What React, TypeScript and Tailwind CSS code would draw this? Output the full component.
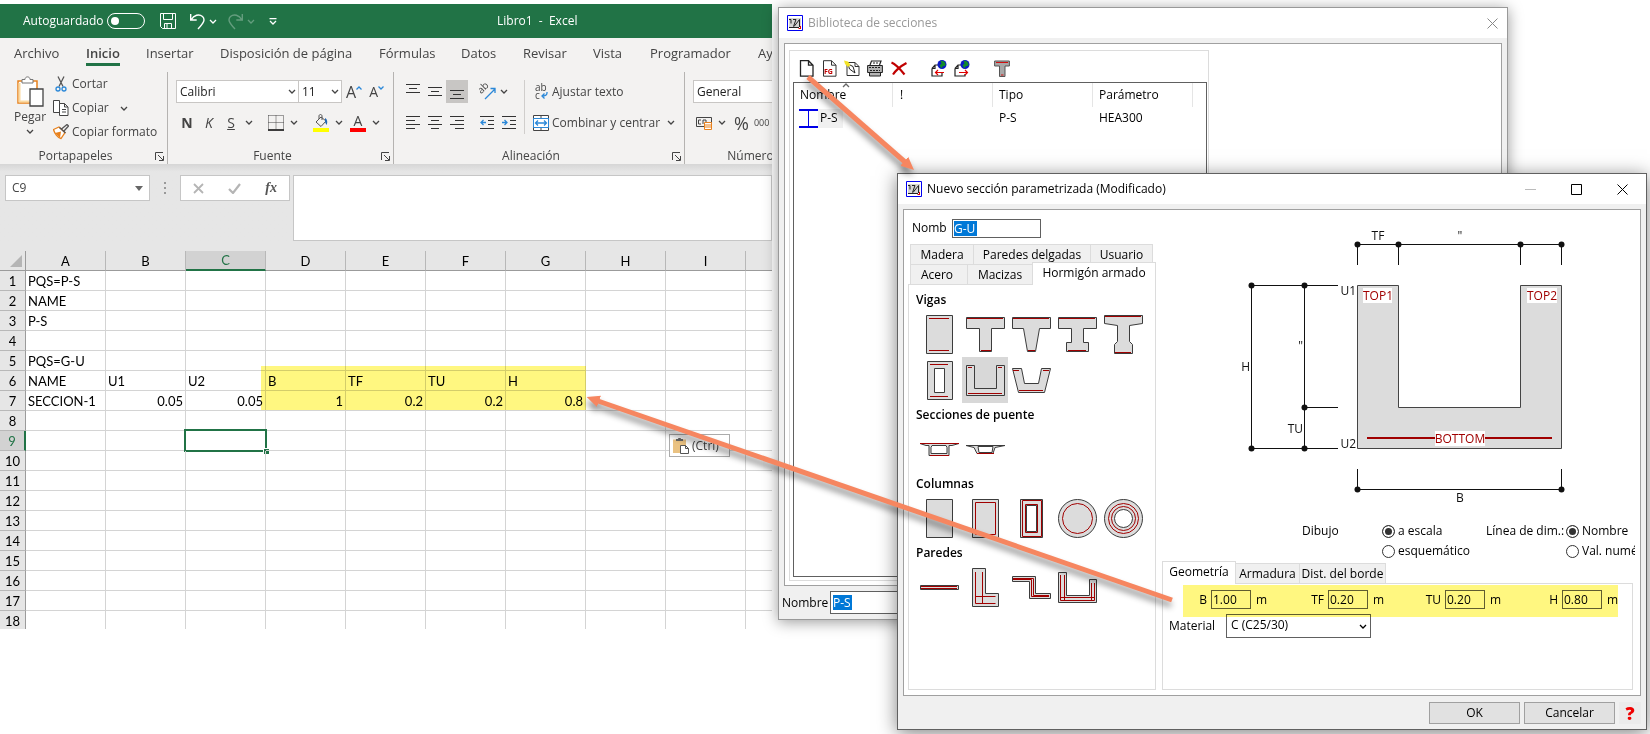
import type { ReactNode } from "react";
import clsx from "clsx";

/* ---------- Shared bits ---------- */

function Chevron({ className = "" }: { className?: string }) {
  return (
    <svg viewBox="0 0 8 5" className={clsx("h-[5px] w-2 shrink-0 fill-none stroke-current", className)}>
      <path d="M1 1l3 3 3-3" strokeWidth="1.3" />
    </svg>
  );
}

function AppLogo() {
  return (
    <svg viewBox="0 0 16 16" className="size-4 shrink-0">
      <path d="M0.5 0.5h15v15h-15z" fill="#fff" stroke="#0000f0" />
      <path d="M2 3h12v9H2z" fill="#d4d4d4" />
      <path d="M2 4.500h2v4M6 4.500h3L6.500 11.500M7 11.500L12.500 4.500v7.500M2 12.500h10" stroke="#222" fill="none" />
      <path d="M13.500 11v3M11.500 13.500h2" stroke="#e00000" fill="none" />
    </svg>
  );
}

/* ---------- Excel ribbon ---------- */

const ribbonTabs = [
  { label: "Archivo", width: "w-[72px]" },
  { label: "Inicio", width: "w-[60px]", active: true },
  { label: "Insertar", width: "w-[74px]" },
  { label: "Disposición de página", width: "w-[159px]" },
  { label: "Fórmulas", width: "w-[82px]" },
  { label: "Datos", width: "w-[62px]" },
  { label: "Revisar", width: "w-[70px]" },
  { label: "Vista", width: "w-[57px]" },
  { label: "Programador", width: "w-[108px]" },
  { label: "Ayuda", width: "w-[60px]" },
];

function RibbonGroup({ label, className, launcher = true, children }: { label: string; className: string; launcher?: boolean; children: ReactNode }) {
  return (
    <section className={clsx("flex shrink-0 flex-col border-r border-[#b5b3b1]", className)}>
      <div className="h-[76px]">{children}</div>
      <div className="relative flex h-4 items-center justify-center pr-4">
        <span>{label}</span>
        {launcher && (
          <button aria-label={`Opciones de ${label}`} className="absolute right-[3px] top-1">
            <svg viewBox="0 0 9 9" className="size-[9px] fill-none stroke-[#444]">
              <path d="M0.500 8V0.500H8M3 3l5 5M8.500 4v4.500H4" />
            </svg>
          </button>
        )}
      </div>
    </section>
  );
}

function Divider() {
  return <span className="h-[22px] w-px shrink-0 bg-[#d0cecc]" />;
}

function AlignIcon({ lines }: { lines: string }) {
  return (
    <svg viewBox="0 0 14 15" className="h-[15px] w-[14px] fill-none stroke-[#333]">
      <path d={lines} />
    </svg>
  );
}

function Clipboard() {
  return (
    <div className="flex pl-[14px]">
      <button className="flex w-8 flex-col items-center pt-1">
        <svg viewBox="0 0 28 31" className="h-[31px] w-7 fill-none">
          <path d="M2 5h19v22H2z" fill="#fff" stroke="#e8811c" strokeWidth="1.500" />
          <path d="M3.500 7v18.500h10" stroke="#fbd9a0" strokeWidth="2" />
          <path d="M6 7V3.500h3C9 0 14 0 14 3.500h3V7z" fill="#fff" stroke="#777" />
          <path d="M14 13h13v17H14z" fill="#fff" stroke="#444" strokeWidth="1.300" />
        </svg>
        <span className="mt-[2px] leading-4">Pegar</span>
        <Chevron className="mt-1" />
      </button>
      <div className="ml-[7px] flex flex-col">
        <button className="flex h-6 items-center gap-[3px]">
          <svg viewBox="0 0 16 16" className="size-4 fill-none">
            <path d="M5 0.500l5 10M11 0.500L6 10.500" stroke="#555" strokeWidth="1.300" />
            <circle cx="5" cy="13" r="2" stroke="#2b88d8" strokeWidth="1.300" />
            <circle cx="11" cy="13" r="2" stroke="#2b88d8" strokeWidth="1.300" />
          </svg>
          Cortar
        </button>
        <button className="flex h-6 items-center gap-[3px]">
          <svg viewBox="0 0 16 16" className="size-4 fill-white stroke-[#444]">
            <path d="M0.500 0.500h6v12h-6z" />
            <path d="M6.500 3.500h5l3.500 3.500v8.500H6.500zM11.500 3.500V7H15M9 9.500h4M9 12h4" />
          </svg>
          Copiar
          <Chevron className="ml-2" />
        </button>
        <button className="flex h-6 items-center gap-[3px] whitespace-nowrap">
          <svg viewBox="0 0 16 16" className="size-4 fill-none">
            <path d="M0.500 5.500L6 3l6 5.500-4 6C5 14 1.500 9.500 0.500 5.500z" fill="#fff" stroke="#e8811c" strokeWidth="1.300" />
            <path d="M2 9l6-1.500L7 14z" fill="#e8811c" />
            <path d="M6.500 3.500l6 5.500M8.500 5l5.500-4.500L15.500 2l-4.500 5" stroke="#555" strokeWidth="1.300" />
          </svg>
          Copiar formato
        </button>
      </div>
    </div>
  );
}

function FontControls() {
  return (
    <div className="flex flex-col gap-2 pl-2 pt-2">
      <div className="flex h-[23px] items-center">
        <label className="flex h-full w-[123px] items-center border border-[#c8c6c4] bg-white pr-[2px]">
          <input aria-label="Fuente" defaultValue="Calibri" className="h-full min-w-0 flex-1 pl-[3px] text-[#222] outline-none" />
          <Chevron />
        </label>
        <label className="flex h-full w-[43px] items-center border border-l-0 border-[#c8c6c4] bg-white pr-[2px]">
          <input aria-label="Tamaño de fuente" defaultValue="11" className="h-full min-w-0 flex-1 pl-[3px] text-[#222] outline-none" />
          <Chevron />
        </label>
        <button aria-label="Aumentar tamaño" className="ml-1 flex items-start text-base leading-5">
          A
          <svg viewBox="0 0 6 4" className="mt-1 h-1 w-[6px] fill-none stroke-[#2b88d8]"><path d="M0.500 3.500L3 1l2.500 2.500" strokeWidth="1.300" /></svg>
        </button>
        <button aria-label="Reducir tamaño" className="ml-[7px] flex items-start text-sm leading-5">
          A
          <svg viewBox="0 0 6 4" className="mt-1 h-1 w-[6px] fill-none stroke-[#2b88d8]"><path d="M0.500 0.500L3 3 5.500 0.500" strokeWidth="1.300" /></svg>
        </button>
      </div>
      <div className="flex h-[23px] items-center text-sm">
        <button className="w-[22px] font-bold">N</button>
        <button className="w-[22px] italic">K</button>
        <button className="w-[22px] underline">S</button>
        <Chevron className="ml-[3px]" />
        <span className="ml-2"><Divider /></span>
        <button aria-label="Bordes" className="ml-[7px]">
          <svg viewBox="0 0 16 16" className="size-4 fill-none stroke-[#444]">
            <path d="M0.500 0.500h15v13.500M0.500 0.500v13.500M8 0.500v13.500M0.500 7.500h15" strokeDasharray="1 1" />
            <path d="M0 15h16" stroke="#000" strokeWidth="1.500" />
          </svg>
        </button>
        <Chevron className="ml-[6px]" />
        <span className="ml-2"><Divider /></span>
        <button aria-label="Color de relleno" className="ml-[7px]">
          <svg viewBox="0 0 16 18" className="h-[18px] w-4 fill-none">
            <path d="M3 8l5-5 5 4-5 5.500zM6 5V2c0-2 3-2 3 0v4" stroke="#555" />
            <path d="M12 4c2 1 3 4 1.500 7L12 8z" fill="#2167b5" />
            <path d="M0 14h16v4H0z" fill="#ffff00" />
          </svg>
        </button>
        <Chevron className="ml-[6px]" />
        <button aria-label="Color de fuente" className="ml-[7px] flex w-4 flex-col items-center leading-[14px]">
          A
          <span className="h-1 w-4 bg-[#ff0000]" />
        </button>
        <Chevron className="ml-[6px]" />
      </div>
    </div>
  );
}

function AlignControls() {
  return (
    <div className="flex pl-2 pt-2">
      <div className="flex w-[122px] flex-col gap-2">
        <div className="flex h-[23px] items-center">
          <button aria-label="Alinear arriba" className="flex h-full w-[22px] items-center justify-center pb-1"><AlignIcon lines="M0 2.500h14M3 6.500h8M0 10.500h14" /></button>
          <button aria-label="Alinear al medio" className="flex h-full w-[22px] items-center justify-center"><AlignIcon lines="M0 3.500h14M3 7.500h8M0 11.500h14" /></button>
          <button aria-label="Alinear abajo" className="flex h-full w-[22px] items-center justify-center bg-[#c8c6c4] pt-1"><AlignIcon lines="M0 4.500h14M3 8.500h8M0 12.500h14" /></button>
          <span className="ml-1"><Divider /></span>
          <button aria-label="Orientación" className="ml-[7px]">
            <svg viewBox="0 0 17 17" className="size-[17px] fill-none">
              <text x="0" y="8" fontSize="10" fill="#444" transform="rotate(-45 5 7)">ab</text>
              <path d="M6 16L16 6M11.500 5.500H16V10" stroke="#2b88d8" strokeWidth="1.300" />
            </svg>
          </button>
          <Chevron className="ml-1" />
        </div>
        <div className="flex h-[23px] items-center">
          <button aria-label="Izquierda" className="flex w-[22px] justify-center"><AlignIcon lines="M0 1.500h14M0 5.500h9M0 9.500h14M0 13.500h9" /></button>
          <button aria-label="Centrar" className="flex w-[22px] justify-center"><AlignIcon lines="M0 1.500h14M3 5.500h8M0 9.500h14M3 13.500h8" /></button>
          <button aria-label="Derecha" className="flex w-[22px] justify-center"><AlignIcon lines="M0 1.500h14M5 5.500h9M0 9.500h14M5 13.500h9" /></button>
          <span className="ml-1"><Divider /></span>
          <button aria-label="Disminuir sangría" className="ml-[8px]">
            <svg viewBox="0 0 14 15" className="h-[15px] w-[14px] fill-none stroke-[#333]">
              <path d="M0 1.500h14M8 5.500h6M8 9.500h6M0 13.500h14" />
              <path d="M6 7.500H1M3.500 5L1 7.500 3.500 10" stroke="#2b88d8" strokeWidth="1.300" />
            </svg>
          </button>
          <button aria-label="Aumentar sangría" className="ml-2">
            <svg viewBox="0 0 14 15" className="h-[15px] w-[14px] fill-none stroke-[#333]">
              <path d="M0 1.500h14M8 5.500h6M8 9.500h6M0 13.500h14" />
              <path d="M0 7.500h5M2.500 5L5 7.500 2.500 10" stroke="#2b88d8" strokeWidth="1.300" />
            </svg>
          </button>
        </div>
      </div>
      <div className="flex flex-col gap-2 border-l border-[#d0cecc] pl-2">
        <button className="flex h-[23px] items-center gap-[3px]">
          <svg viewBox="0 0 16 18" className="h-[18px] w-4 overflow-visible fill-none">
            <text x="2" y="8" fontSize="10" fill="#444">ab</text>
            <text x="2" y="16" fontSize="10" fill="#444">c</text>
            <path d="M14 9v1c0 2-2 3-5 3M11.500 10.500L9 13l2.500 2.500" stroke="#2b88d8" strokeWidth="1.300" />
          </svg>
          Ajustar texto
        </button>
        <button className="flex h-[23px] items-center gap-[3px]">
          <svg viewBox="0 0 16 16" className="size-4 fill-none">
            <path d="M0.500 0.500h15v15h-15zM8 0.500v3M8 12.500v3" fill="#fff" stroke="#444" />
            <path d="M0.500 3.500h15v9h-15z" fill="#fff" stroke="#2b88d8" />
            <path d="M3 8h10M5 5.500L2.500 8 5 10.500M11 5.500L13.500 8 11 10.500" stroke="#2b88d8" strokeWidth="1.300" />
          </svg>
          Combinar y centrar
          <Chevron className="ml-1" />
        </button>
      </div>
    </div>
  );
}

function NumberControls() {
  return (
    <div className="flex flex-col gap-2 pl-2 pt-2">
      <input aria-label="Formato de número" defaultValue="General" className="h-[23px] w-[120px] border border-[#c8c6c4] bg-white pl-[3px] text-[#222]" />
      <div className="flex h-[23px] items-center">
        <button aria-label="Formato de contabilidad" className="ml-[3px]">
          <svg viewBox="0 0 16 14" className="h-[14px] w-4 fill-none">
            <path d="M0.500 1.500h15v9H0.500z" stroke="#444" />
            <path d="M5 4H2.500v4H5M7 8V4h3v2" stroke="#444" />
            <path d="M8.500 6.500h7v7h-7zM8.500 9h7M8.500 11h7" fill="#fff" stroke="#e8811c" />
          </svg>
        </button>
        <Chevron className="ml-[6px]" />
        <button className="ml-2 text-lg">%</button>
        <button className="ml-[5px] text-[9px]">000</button>
      </div>
    </div>
  );
}

/* ---------- Excel grid ---------- */

const columns = ["A", "B", "C", "D", "E", "F", "G", "H", "I", "J"];

const cells: Record<string, string | number> = {
  A1: "PQS=P-S",
  A2: "NAME",
  A3: "P-S",
  A5: "PQS=G-U",
  A6: "NAME",
  B6: "U1",
  C6: "U2",
  D6: "B",
  E6: "TF",
  F6: "TU",
  G6: "H",
  A7: "SECCION-1",
  B7: 0.05,
  C7: 0.05,
  D7: 1,
  E7: 0.2,
  F7: 0.2,
  G7: 0.8,
};

function Sheet() {
  return (
    <table className="w-[826px] table-fixed border-separate border-spacing-0 bg-white font-['Lato',sans-serif] text-[13px] leading-[18px] text-black">
      <colgroup>
        <col className="w-[26px]" />
      </colgroup>
      <thead>
        <tr className="h-5 bg-[#e6e6e6]">
          <th className="border-b border-r border-[#9b9b9b] p-0">
            <svg viewBox="0 0 12 12" className="ml-[10px] size-3 fill-[#b5b5b5]"><path d="M12 0v12H0z" /></svg>
          </th>
          {columns.map((c) => (
            <th
              key={c}
              className={clsx(
                "border-r border-r-[#b8b8b8] p-0 font-normal",
                c === "C" ? "border-b-2 border-b-[#217346] bg-[#d2d2d2] text-[#217346]" : "border-b border-b-[#9b9b9b]",
              )}
            >
              {c}
            </th>
          ))}
        </tr>
      </thead>
      <tbody>
        {Array.from({ length: 18 }, (_, i) => i + 1).map((row) => (
          <tr key={row} className="h-5">
            <th
              className={clsx(
                "border-b border-b-[#b8b8b8] p-0 pt-px text-center font-normal leading-[17px]",
                row === 9 ? "border-r-2 border-r-[#217346] bg-[#d2d2d2] text-[#217346]" : "border-r border-r-[#9b9b9b] bg-[#e6e6e6]",
              )}
            >
              {row}
            </th>
            {columns.map((c) => {
              const value = cells[c + row];
              return (
                <td
                  key={c}
                  className={clsx("relative border-b border-r border-[#d4d4d4] px-[2px] pb-0 pt-px leading-[17px]", typeof value === "number" && "text-right")}
                >
                  {value}
                  {c + row === "C9" && (
                    <span className="absolute -inset-[2px] border-2 border-[#217346]">
                      <span className="absolute -bottom-1 -right-1 size-[6px] border-l border-t border-white bg-[#217346]" />
                    </span>
                  )}
                </td>
              );
            })}
          </tr>
        ))}
      </tbody>
    </table>
  );
}

function ExcelWindow() {
  return (
    <main className="absolute left-0 top-1 flex h-[625px] w-[772px] flex-col overflow-hidden bg-[#e6e6e6] text-xs text-[#444]">
      <header className="relative flex h-[34px] shrink-0 items-center bg-[#217346] pl-[23px] text-white">
        <span className="w-[84px]">Autoguardado</span>
        <button aria-label="Autoguardado" className="flex h-4 w-[38px] items-center rounded-full border border-white px-[3px]">
          <span className="size-2 rounded-full bg-white" />
        </button>
        <button aria-label="Guardar" className="ml-[15px]">
          <svg viewBox="0 0 16 16" className="size-4 fill-none stroke-white">
            <path d="M0.500 0.500h15v15h-13l-2-2zM3.500 0.500v6h9v-6M4.500 15.500v-5h7v5M7 11v4" />
          </svg>
        </button>
        <button aria-label="Deshacer" className="ml-[14px] flex items-center gap-1">
          <svg viewBox="0 0 15 17" className="h-[17px] w-[15px] fill-none stroke-white">
            <path d="M0.700 1v6h6M1 7C4 2 9 0.500 12.500 3.500c3 3 1.500 6-4.500 12.500" strokeWidth="1.400" />
          </svg>
          <Chevron />
        </button>
        <button aria-label="Rehacer" className="ml-[11px] flex items-center gap-1 opacity-30">
          <svg viewBox="0 0 15 17" className="h-[17px] w-[15px] fill-none stroke-white">
            <path d="M14.300 1v6h-6M14 7C11 2 6 0.500 2.500 3.500c-3 3-1.500 6 4.500 12.500" strokeWidth="1.400" />
          </svg>
          <Chevron />
        </button>
        <button aria-label="Personalizar" className="ml-[14px]">
          <svg viewBox="0 0 8 7" className="h-[7px] w-2 fill-none stroke-white"><path d="M0.500 0.700h7M1 3l3 3 3-3" strokeWidth="1.300" /></svg>
        </button>
        <h1 className="absolute left-[497px] whitespace-pre">Libro1  -  Excel</h1>
      </header>

      <nav className="flex h-[30px] shrink-0 bg-[#f3f2f1] pl-[14px] text-[13px] text-[#444]">
        {ribbonTabs.map((tab) => (
          <a key={tab.label} href="#" className={clsx("flex shrink-0 whitespace-nowrap", tab.width)}>
            <span className={clsx("h-7 leading-[31px]", tab.active && "border-b-[3px] border-[#217346] font-semibold")}>{tab.label}</span>
          </a>
        ))}
      </nav>

      <div className="flex h-24 shrink-0 bg-[#f3f2f1] pt-1 text-xs">
        <RibbonGroup label="Portapapeles" className="w-[168px]"><Clipboard /></RibbonGroup>
        <RibbonGroup label="Fuente" className="w-[226px]"><FontControls /></RibbonGroup>
        <RibbonGroup label="Alineación" className="w-[291px]"><AlignControls /></RibbonGroup>
        <RibbonGroup label="Número" className="w-[148px]" launcher={false}><NumberControls /></RibbonGroup>
      </div>

      <div className="flex shrink-0 items-start bg-linear-to-b from-[#d6d6d6] to-[#e6e6e6] to-10% pl-[5px] pt-[11px]">
        <label className="flex h-[26px] w-[145px] items-center border border-[#c6c6c6] bg-white px-[6px]">
          <input aria-label="Cuadro de nombres" defaultValue="C9" className="min-w-0 flex-1 outline-none" />
          <svg viewBox="0 0 8 5" className="h-[5px] w-2 fill-[#666]"><path d="M0 0h8L4 5z" /></svg>
        </label>
        <svg viewBox="0 0 2 12" className="ml-[14px] mt-[7px] h-3 w-[2px] fill-[#999]"><path d="M0 0h2v2H0zM0 5h2v2H0zM0 10h2v2H0z" /></svg>
        <div className="ml-[14px] flex h-[26px] w-[110px] items-center justify-between border border-[#c6c6c6] bg-white px-3">
          <button aria-label="Cancelar">
            <svg viewBox="0 0 11 11" className="size-[11px] fill-none stroke-[#b5b5b5]"><path d="M1 1l9 9M10 1l-9 9" strokeWidth="1.800" /></svg>
          </button>
          <button aria-label="Introducir">
            <svg viewBox="0 0 13 11" className="h-[11px] w-[13px] fill-none stroke-[#b5b5b5]"><path d="M1 6l4 4 7-9" strokeWidth="2.200" /></svg>
          </button>
          <button className="font-['Liberation_Serif',serif] text-sm font-bold italic text-[#555]">fx</button>
        </div>
        <textarea aria-label="Barra de fórmulas" className="ml-[3px] h-[66px] flex-1 resize-none border border-[#c6c6c6] bg-white" />
      </div>
      <div className="h-[10px] shrink-0" />

      <Sheet />

      <button className="absolute left-[669px] top-[430px] flex h-[23px] w-[61px] items-center gap-[3px] border border-[#ababab] bg-white pl-[3px] text-[#444]">
        <svg viewBox="0 0 16 16" className="size-4 fill-none">
          <path d="M0 1.500h13V15H0z" fill="#eac282" />
          <path d="M3 3V1h2c0-1.500 3-1.500 3 0h2v2z" fill="#666" />
          <path d="M7.500 7.500h5l3 3v5h-8zM12.500 7.500v3h3" fill="#fff" stroke="#555" />
        </svg>
        (Ctrl)
        <svg viewBox="0 0 5 3" className="ml-[2px] h-[3px] w-[5px] fill-[#555]"><path d="M0 0h5L2.500 3z" /></svg>
      </button>
    </main>
  );
}

/* ---------- Section library window ---------- */

const docPath = "M1.500 0.700h8l4.500 4.500v11h-12.500zM9.500 0.700v4.500h4.500";

function ToolButton({ label, className, children }: { label: string; className?: string; children: ReactNode }) {
  return (
    <button aria-label={label} className={className}>
      <svg viewBox="0 0 16 17" className="h-[17px] w-4 fill-none">{children}</svg>
    </button>
  );
}

function Globe() {
  return (
    <>
      <circle cx="11" cy="4.500" r="4.500" fill="#0a18c8" />
      <path d="M9.500 0.500c4 0 5.500 3 5 5l-3 1-1 2-2-3 2-2z" fill="#118a2a" />
    </>
  );
}

function LibraryWindow() {
  return (
    <section className="absolute left-[778px] top-[7px] flex h-[613px] w-[730px] flex-col border border-[#999] bg-[#f0f0f0] text-xs text-black shadow-[0_2px_14px_rgba(0,0,0,0.4)]">
      <header className="flex h-[30px] shrink-0 items-center bg-white px-2">
        <AppLogo />
        <h2 className="ml-[5px] flex-1 text-[#999]">Biblioteca de secciones</h2>
        <button aria-label="Cerrar" className="mr-px">
          <svg viewBox="0 0 11 11" className="size-[11px] fill-none stroke-[#888]"><path d="M0.500 0.500l10 10M10.500 0.500l-10 10" /></svg>
        </button>
      </header>

      <div className="mx-[5px] mt-[5px] flex h-[543px] border border-[#a0a0a0] bg-white p-1 pt-[6px]">
        <div className="flex w-[420px] flex-col border border-[#dcdcdc] py-[3px] pl-[3px] pr-px">
          <div className="flex h-7 shrink-0 items-center pl-[6px]">
            <ToolButton label="Nueva sección"><path d={docPath} stroke="#222" strokeWidth="1.300" /></ToolButton>
            <ToolButton label="Sección FG" className="ml-[7px]">
              <path d={docPath} stroke="#333" />
              <text x="2" y="14" fontSize="7" fontWeight="700" fill="#c00000">FG</text>
            </ToolButton>
            <ToolButton label="Editar" className="ml-[6px]">
              <path d="M3 2.500h8l4 4v9H3zM11 2.500v4h4" fill="#fff" stroke="#333" />
              <path d="M4 4l5 2.500 2 6.500-5.500-4z" fill="#fff" stroke="#222" />
              <path d="M0 0.500l4 1 2.500 3.500-2.500 2-3-3z" fill="#f4e428" />
            </ToolButton>
            <ToolButton label="Imprimir" className="ml-[7px]">
              <path d="M3 5l1.500-4h9.500l-1.500 4" fill="#fff" stroke="#222" strokeWidth="1.200" />
              <path d="M0.600 5.500h14.800v7H0.600zM2.500 12.500h11v3.500h-11z" fill="#b4b4b4" stroke="#222" />
              <path d="M6 3h5M2 7.500h12M3 10.500h10" stroke="#222" strokeDasharray="2 1" />
            </ToolButton>
            <ToolButton label="Eliminar" className="ml-2"><path d="M0.500 2.500c5 2 9 7 13 12M15.500 3C10 6 5 10 2 14.500" stroke="#c00000" strokeWidth="2.200" /></ToolButton>
            <ToolButton label="Importar" className="ml-[24px]">
              <path d="M1 8.500l3-3.500h3M1 8.500h3V5M1 8.500v7.500h10v-4" stroke="#222" strokeWidth="1.200" />
              <Globe />
              <path d="M4 12.500h9M7 10l-2.500 2.500L7 15" stroke="#e00000" strokeWidth="1.200" />
            </ToolButton>
            <ToolButton label="Exportar" className="ml-[7px]">
              <path d="M1 8.500l3-3.500h3M1 8.500h3V5M1 8.500v7.500h10v-2" stroke="#222" strokeWidth="1.200" />
              <Globe />
              <path d="M5 12.500h9M11 10l2.500 2.500L11 15" stroke="#e00000" strokeWidth="1.200" />
            </ToolButton>
            <ToolButton label="Sección T" className="ml-[24px]">
              <path d="M0.600 1h14.800v5H11v10.500H5.500V6H0.600z" fill="#a8a8a8" stroke="#555" />
              <path d="M2 2.500h12M7 15h2.500" stroke="#d01010" />
            </ToolButton>
          </div>
          <div className="flex-1 border border-[#606060]">
            <table className="w-full table-fixed border-separate border-spacing-0 text-left">
              <thead>
                <tr className="h-6">
                  <th className="relative w-[99px] border-r border-[#e5e5e5] p-0 pl-[6px] font-normal">
                    Nombre
                    <Chevron className="absolute left-12 top-0 rotate-180 text-[#666]" />
                  </th>
                  <th className="w-[100px] border-r border-[#e5e5e5] p-0 pl-[7px] font-normal">!</th>
                  <th className="w-[100px] border-r border-[#e5e5e5] p-0 pl-[6px] font-normal">Tipo</th>
                  <th className="w-[100px] border-r border-[#e5e5e5] p-0 pl-[6px] font-normal">Parámetro</th>
                  <th className="p-0" />
                </tr>
              </thead>
              <tbody>
                <tr className="h-[22px]">
                  <td className="p-0 pl-[5px]">
                    <span className="flex w-11 items-center gap-[2px] bg-[#f0f0f0]">
                      <svg viewBox="0 0 19 19" className="size-[19px] fill-none stroke-[#0000e8]">
                        <path d="M0 0h19v19H0z" fill="#fff" stroke="none" />
                        <path d="M0 1h19M0 18h19" strokeWidth="2" />
                        <path d="M9.500 1v17" />
                      </svg>
                      P-S
                    </span>
                  </td>
                  <td />
                  <td className="p-0 pl-[6px]">P-S</td>
                  <td className="p-0 pl-[6px]">HEA300</td>
                  <td />
                </tr>
              </tbody>
            </table>
          </div>
        </div>
      </div>

      <label className="flex flex-1 items-center gap-1 pl-[3px]">
        <span className="w-11">Nombre</span>
        <input
          defaultValue="P-S"
          className="h-[23px] w-[200px] border border-[#606060] bg-white bg-[linear-gradient(#0078d7,#0078d7)] bg-size-[19px_15px] bg-position-[2px_3px] bg-no-repeat px-[2px] text-white"
        />
      </label>
    </section>
  );
}

/* ---------- Parametric section dialog ---------- */

type Shape = { name: string; outline: string; bars: string; selected?: boolean };

const circle = (r: number) => `M${23.5 - r} 23.5a${r} ${r} 0 1 0 ${2 * r} 0a${r} ${r} 0 1 0 ${-2 * r} 0z`;

const shapeGroups: { title: string; shapes: Shape[] }[] = [
  {
    title: "Vigas",
    shapes: [
      { name: "Rectangular", outline: "M10.5 4.5h26v38h-26z", bars: "M13 7.500h20M13 39.500h20" },
      { name: "T", outline: "M4.5 6.500h38v11h-13v23h-12v-23h-13z", bars: "M5 7.500h36M19 39.500h10" },
      { name: "T trapecial", outline: "M4.5 6.500h38v11h-11l-4 23h-8l-4-23h-11z", bars: "M5 7.500h36M20 39.500h7" },
      { name: "I", outline: "M4.5 6.500h38v11h-13v14h5v9h-22v-9h5v-14h-13z", bars: "M5 7.500h36M14 39.500h18" },
      { name: "I acartelada", outline: "M4.5 4.500h38v8l-13 2v16l3 3v9h-18v-9l3-3v-16l-13-2z", bars: "M5 5.500h36M15 41.500h16" },
      { name: "Cajón", outline: "M11.5 4.500h25v38h-25zM18.5 11.500v24h10v-24z", bars: "M14 7.500h18M14 39.500h18" },
      { name: "U", outline: "M4.5 8.500h8v23h22v-23h8v30h-38z", bars: "M6 10.500h4M36 10.500h4M6 36.500h34", selected: true },
      { name: "U inclinada", outline: "M4.5 11.500h9l3 15h14l3-15h9l-6 24h-26z", bars: "M5 13.500h6M35 13.500h6M11 33.500h24" },
    ],
  },
  {
    title: "Secciones de puente",
    shapes: [
      { name: "Puente cajón", outline: "M4 17.500h39l-7 2h-3v10h-20v-10h-3zM16 19.500l-1 2v6h16v-6l-1-2z", bars: "M4 17.500h39M14 29.500h19" },
      { name: "Puente trapecial", outline: "M4 19.500h39l-10 2-2 6h-16l-3-6zM16 20.500l1 6h13l1-6z", bars: "M15 27.500h17" },
    ],
  },
  {
    title: "Columnas",
    shapes: [
      { name: "Columna rectangular", outline: "M10.5 4.500h26v38h-26z", bars: "" },
      { name: "Columna armada", outline: "M10.5 4.500h26v38h-26z", bars: "M13.5 7.500h20v32h-20z" },
      { name: "Columna hueca", outline: "M12.5 4.500h22v38h-22zM18.5 10.500v26h10v-26z", bars: "M14.5 5.500h19v36h-19zM17.5 9.500h12v28h-12z" },
      { name: "Columna circular", outline: circle(19), bars: circle(15) },
      { name: "Columna anular", outline: circle(19) + circle(9), bars: circle(15) + circle(12) },
    ],
  },
  {
    title: "Paredes",
    shapes: [
      { name: "Pared", outline: "M4.5 21.500h38v4h-38z", bars: "M5 22.500h36M5 24.500h36" },
      { name: "Pared L", outline: "M10.5 4.500h13v25h13v13h-26z", bars: "M13.500 8v31.500h20M20.500 8v31.500M13.500 32.500h20" },
      { name: "Pared Z", outline: "M4.5 12.500h23v17h15v5h-21v-17h-17z", bars: "M5 14.500h20.500v17H41M5 15.500h18.500v17H41" },
      { name: "Pared U", outline: "M4.5 8.500h8v23h23v-16h7v23h-38z", bars: "M6.500 11v25.500h34V19M10.500 11v25.500M37.500 19v17.500M6.500 33.500h34" },
    ],
  },
];

function ShapePicker() {
  return (
    <div className="flex-1 border border-[#dcdcdc] pl-[7px] pt-[3px]">
      {shapeGroups.map((group) => (
        <section key={group.title}>
          <h3 className="h-[23px] font-semibold leading-6">{group.title}</h3>
          <div className="grid w-[230px] grid-cols-5">
            {group.shapes.map((s) => (
              <button key={s.name} aria-label={s.name} className={clsx("size-[46px]", s.selected && "bg-[#d8d8d8]")}>
                <svg viewBox="0 0 46 46" className="size-full fill-none">
                  <path d={s.outline} fill="#dcdcdc" fillRule="evenodd" stroke="#3c3c3c" />
                  <path d={s.bars} stroke="#a00000" />
                </svg>
              </button>
            ))}
          </div>
        </section>
      ))}
    </div>
  );
}

/* Cross-section drawing with its dimension lines */
function SectionDrawing() {
  const dots = [
    [127, 34], [168, 34], [290, 34], [331, 34],
    [21, 75], [74, 75], [74, 197], [21, 238], [74, 238],
    [127, 279], [331, 279],
  ];
  return (
    <svg viewBox="0 0 350 300" className="h-[300px] w-[350px] text-xs">
      <path d="M127.5 75.500h41v122h122v-122h41v163h-204z" fill="#dcdcdc" stroke="#444" />
      <path
        d="M127.500 55V34.500h204V55M168.500 34v21M290.500 34v21M108 75.500H21.500v163H108M74.500 75v163M74 197.500h34M127.500 259v20.500h204V259"
        fill="none"
        stroke="#111"
      />
      {dots.map(([cx, cy]) => (
        <circle key={`${cx}-${cy}`} cx={cx + 0.5} cy={cy + 0.5} r="3" fill="#111" />
      ))}
      <path d="M137 228h185" stroke="#a00000" strokeWidth="2" />
      <path d="M133 78h29v15h-29zM297 78h30v15h-30zM205 221h50v15h-50z" fill="#fff" />
      <g fill="#111" textAnchor="middle">
        <text x="148" y="30">TF</text>
        <text x="230" y="30">"</text>
        <text x="230" y="292">B</text>
        <g fill="#a00000">
          <text x="148" y="90">TOP1</text>
          <text x="312" y="90">TOP2</text>
          <text x="230" y="233">BOTTOM</text>
        </g>
      </g>
      <g fill="#111" textAnchor="end">
        <text x="126" y="85">U1</text>
        <text x="126" y="238">U2</text>
        <text x="20" y="161">H</text>
        <text x="73" y="223">TU</text>
        <text x="73" y="140">"</text>
      </g>
    </svg>
  );
}

function Radio({ name, label, checked }: { name: string; label: string; checked?: boolean }) {
  return (
    <label className="flex h-5 items-center gap-[3px] whitespace-nowrap">
      <input
        type="radio"
        name={name}
        defaultChecked={checked}
        className="size-[13px] shrink-0 appearance-none rounded-full border border-[#333] bg-white checked:bg-[#333] checked:shadow-[inset_0_0_0_2px_#fff]"
      />
      {label}
    </label>
  );
}

const dimensions = [
  { name: "B", value: "1.00" },
  { name: "TF", value: "0.20" },
  { name: "TU", value: "0.20" },
  { name: "H", value: "0.80" },
];

function SectionDialog() {
  return (
    <section className="absolute left-[897px] top-[173px] flex h-[557px] w-[750px] flex-col border border-[#606060] bg-[#f0f0f0] text-xs text-black shadow-[0_3px_18px_rgba(0,0,0,0.5)]">
      <header className="flex h-[30px] shrink-0 items-center bg-white pl-2 pr-[18px]">
        <AppLogo />
        <h2 className="ml-[5px] flex-1">Nuevo sección parametrizada (Modificado)</h2>
        <div className="flex gap-[35px]">
          <button aria-label="Minimizar"><svg viewBox="0 0 11 11" className="size-[11px] stroke-[#bbb]"><path d="M0 5.500h11" /></svg></button>
          <button aria-label="Maximizar"><svg viewBox="0 0 11 11" className="size-[11px] fill-none stroke-black"><path d="M0.500 0.500h10v10h-10z" /></svg></button>
          <button aria-label="Cerrar"><svg viewBox="0 0 11 11" className="size-[11px] fill-none stroke-black"><path d="M0.500 0.500l10 10M10.500 0.500l-10 10" /></svg></button>
        </div>
      </header>

      <div className="mx-[5px] mt-[5px] flex h-[487px] gap-[6px] border border-[#a0a0a0] bg-white pb-[5px] pl-1">
        <div className="flex w-[248px] shrink-0 flex-col pt-2">
          <label className="flex h-5 items-center pl-1">
            <span className="w-10">Nomb</span>
            <input
              defaultValue="G-U"
              className="h-[19px] w-[89px] border border-[#606060] bg-white bg-[linear-gradient(#0078d7,#0078d7)] bg-size-[23px_15px] bg-position-[1px_1px] bg-no-repeat px-[1px] text-white"
            />
          </label>
          <div className="mt-[6px] flex h-5 pl-[2px] leading-5">
            <button className="w-16 border border-b-0 border-[#dcdcdc] bg-[#f0f0f0]">Madera</button>
            <button className="w-[116px] border-y border-b-0 border-[#dcdcdc] bg-[#f0f0f0]">Paredes delgadas</button>
            <button className="w-[63px] border border-b-0 border-[#dcdcdc] bg-[#f0f0f0]">Usuario</button>
          </div>
          <div className="flex h-5 items-end pl-[2px]">
            <button className="h-5 w-[58px] border border-b-0 border-[#dcdcdc] bg-[#f0f0f0] pr-1">Acero</button>
            <button className="h-5 w-16 border-t border-[#dcdcdc] bg-[#f0f0f0]">Macizas</button>
            <button className="relative -mb-px h-[23px] w-[124px] border border-b-0 border-[#dcdcdc] bg-white pb-[2px]">Hormigón armado</button>
          </div>
          <ShapePicker />
        </div>

        <div className="flex min-w-0 flex-1 flex-col">
          <div className="pl-[68px]"><SectionDrawing /></div>
          <div className="mt-[11px] flex pl-[140px] pr-[5px]">
            <span className="w-20 leading-5">Dibujo</span>
            <div className="w-[104px]">
              <Radio name="dibujo" label="a escala" checked />
              <Radio name="dibujo" label="esquemático" />
            </div>
            <span className="w-20 whitespace-nowrap leading-5">Línea de dim.:</span>
            <div className="min-w-0 flex-1 overflow-hidden">
              <Radio name="linea" label="Nombre" checked />
              <Radio name="linea" label="Val. numérico" />
            </div>
          </div>
          <div className="flex h-[22px] items-end">
            <button className="relative -mb-px h-[23px] w-[74px] border border-b-0 border-[#dcdcdc] bg-white pb-[2px]">Geometría</button>
            <button className="h-5 w-[63px] border-t border-[#dcdcdc] bg-[#f0f0f0]">Armadura</button>
            <button className="h-5 w-[87px] border border-b-0 border-[#dcdcdc] bg-[#f0f0f0]">Dist. del borde</button>
          </div>
          <div className="mr-[7px] flex-1 border border-[#dcdcdc] pt-[5px]">
            <div className="flex">
              {dimensions.map((d) => (
                <label key={d.name} className="flex h-[21px] w-[117px] shrink-0 items-center last:w-[110px]">
                  <span className="w-11 text-right">{d.name}</span>
                  <input defaultValue={d.value} className="ml-1 h-[19px] w-10 border border-[#606060] bg-white pl-px" />
                  <span className="ml-[5px]">m</span>
                </label>
              ))}
            </div>
            <label className="mt-1 flex items-center pl-[6px]">
              <span className="w-[57px]">Material</span>
              <span className="relative flex items-center">
                <select className="h-6 w-[145px] appearance-none border border-[#606060] bg-white pb-[2px] pl-1">
                  <option>C (C25/30)</option>
                </select>
                <Chevron className="pointer-events-none absolute right-1" />
              </span>
            </label>
          </div>
        </div>
      </div>

      <footer className="flex flex-1 items-center justify-end gap-1 pr-[5px]">
        <button className="h-[22px] w-[91px] border border-[#a0a0a0] bg-[#e1e1e1]">OK</button>
        <button className="h-[22px] w-[91px] border border-[#a0a0a0] bg-[#e1e1e1]">Cancelar</button>
        <button className="h-[22px] w-[22px] bg-[#ebebeb] text-lg font-extrabold leading-5 text-[#f00000]">?</button>
      </footer>
    </section>
  );
}

/* ---------- Annotations over the windows ---------- */

function Arrows() {
  return (
    <svg className="pointer-events-none absolute inset-0 size-full drop-shadow-[-1px_5px_3px_rgba(0,0,0,0.45)]">
      <defs>
        <marker id="head" markerUnits="userSpaceOnUse" markerWidth="13" markerHeight="14" refX="1" refY="7" orient="auto">
          <path d="M0 1l13 6-13 6z" fill="#f68660" />
        </marker>
      </defs>
      <path d="M808 77l97 85" stroke="#f68660" strokeWidth="5" markerEnd="url(#head)" />
      <path d="M1172 600L598 401" stroke="#f68660" strokeWidth="5" markerEnd="url(#head)" />
    </svg>
  );
}

export default function App() {
  return (
    <div className="relative isolate min-h-screen w-full overflow-hidden bg-white font-['Open_Sans','Noto_Sans',sans-serif]">
      <ExcelWindow />
      <LibraryWindow />
      <SectionDialog />
      <div className="pointer-events-none absolute left-[261px] top-[366px] h-11 w-[325px] bg-[#fff780] mix-blend-multiply" />
      <div className="pointer-events-none absolute left-[1183px] top-[585px] h-8 w-[435px] bg-[#fff780] mix-blend-multiply" />
      <Arrows />
    </div>
  );
}
